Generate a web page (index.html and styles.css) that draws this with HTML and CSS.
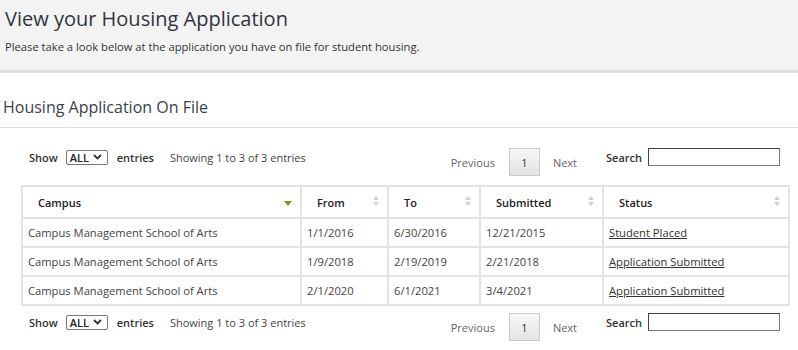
FILE: index.html
```html
<!DOCTYPE html>
<html>
<head>
<meta charset="utf-8">
<link rel="stylesheet" href="styles.css">
</head>
<body>
<header class="page-header">
  <h1 class="page-title">View your Housing Application</h1>
  <p class="page-sub">Please take a look below at the application you have on file for student housing.</p>
</header>
<section class="section">
  <h2 class="section-title">Housing Application On File</h2>
  <div class="dt">
    <div class="controls">
      <div class="length">
        <span class="lbl">Show</span>
        <span class="select">ALL <svg width="9" height="6" viewBox="0 0 9 6"><path d="M1 1 L4.5 4.5 L8 1" fill="none" stroke="#333" stroke-width="1.8"/></svg></span>
        <span class="lbl">entries</span>
        <span class="info">Showing 1 to 3 of 3 entries</span>
      </div>
      <div class="right">
        <div class="pager">
          <span class="pg-link">Previous</span>
          <span class="pg-btn">1</span>
          <span class="pg-link">Next</span>
        </div>
        <label class="search"><span class="lbl">Search</span><span class="input"></span></label>
      </div>
    </div>
    <table class="grid">
      <colgroup>
        <col class="c1"><col class="c2"><col class="c3"><col class="c4"><col class="c5">
      </colgroup>
      <thead>
        <tr>
          <th>Campus<span class="sort-active"></span></th>
          <th>From<span class="sort"></span></th>
          <th>To<span class="sort"></span></th>
          <th>Submitted<span class="sort"></span></th>
          <th>Status<span class="sort"></span></th>
        </tr>
      </thead>
      <tbody>
        <tr><td>Campus Management School of Arts</td><td>1/1/2016</td><td>6/30/2016</td><td>12/21/2015</td><td><a href="#">Student Placed</a></td></tr>
        <tr><td>Campus Management School of Arts</td><td>1/9/2018</td><td>2/19/2019</td><td>2/21/2018</td><td><a href="#">Application Submitted</a></td></tr>
        <tr><td>Campus Management School of Arts</td><td>2/1/2020</td><td>6/1/2021</td><td>3/4/2021</td><td><a href="#">Application Submitted</a></td></tr>
      </tbody>
    </table>
    <div class="controls bottom">
      <div class="length">
        <span class="lbl">Show</span>
        <span class="select">ALL <svg width="9" height="6" viewBox="0 0 9 6"><path d="M1 1 L4.5 4.5 L8 1" fill="none" stroke="#333" stroke-width="1.8"/></svg></span>
        <span class="lbl">entries</span>
        <span class="info">Showing 1 to 3 of 3 entries</span>
      </div>
      <div class="right">
        <div class="pager">
          <span class="pg-link">Previous</span>
          <span class="pg-btn">1</span>
          <span class="pg-link">Next</span>
        </div>
        <label class="search"><span class="lbl">Search</span><span class="input"></span></label>
      </div>
    </div>
  </div>
</section>
</body>
</html>
```
FILE: styles.css
```css
* { box-sizing: border-box; }
html, body { margin: 0; padding: 0; background: #fff; }
body { font-family: "Open Sans", "Liberation Sans", sans-serif; color: #333; }

.page-header {
  background: #f3f3f3;
  height: 73px;
  border-bottom: 3px solid #dedede;
  padding: 6px 5px 0;
}
.page-title {
  margin: 0;
  font-size: 20px;
  font-weight: 400;
  line-height: 26px;
  color: #2f3540;
}
.page-sub {
  margin: 8px 0 0;
  font-size: 11.2px;
  line-height: 14px;
  color: #333;
}

.section-title {
  margin: 0;
  padding: 23px 3px 0;
  height: 55px;
  border-bottom: 1px solid #ddd;
  font-size: 16px;
  font-weight: 400;
  line-height: 22px;
  color: #3a3f48;
}

.dt { margin: 0 10px 0 21px; }

.controls {
  display: flex;
  justify-content: space-between;
  padding: 20px 8px 0;
  height: 57px;
}
.controls.bottom { padding-top: 7px; height: 45px; }

.length { display: flex; align-items: center; height: 18px; font-size: 11px; }
.lbl { font-weight: 600; font-size: 11px; color: #333; }
.select {
  display: inline-flex;
  align-items: center;
  gap: 4px;
  height: 15px;
  width: 42px;
  margin: 0 9px 0 8px;
  padding: 0 3px;
  border: 1px solid #777;
  border-radius: 2px;
  font-size: 11px;
  font-weight: 600;
  color: #222;
}
.info { margin-left: 16px; font-size: 11px; color: #444; }

.right { display: flex; align-items: flex-start; }
.pager { display: flex; align-items: center; height: 28px; margin-right: 29px; }
.pg-link { font-size: 11px; color: #666; }
.pg-btn {
  width: 31px;
  height: 28px;
  margin: 0 13px 0 14px;
  display: flex;
  align-items: center;
  justify-content: center;
  border: 1px solid #cacaca;
  background: linear-gradient(#f8f8f8, #e3e3e3);
  font-size: 11px;
  color: #333;
}
.search { display: flex; align-items: center; height: 18px; }
.input {
  display: block;
  width: 132px;
  height: 18px;
  margin-left: 6px;
  border: 1px solid #444;
  border-right-color: #777;
  border-bottom-color: #777;
  background: #fff;
}

.grid {
  width: 767px;
  border-collapse: collapse;
  table-layout: fixed;
  font-size: 11.2px;
}
.c1 { width: 279px; }
.c2 { width: 87px; }
.c3 { width: 92px; }
.c4 { width: 123px; }
.c5 { width: 186px; }
.grid th, .grid td {
  border: 2px solid #e3e3e3;
  text-align: left;
}
.grid th {
  position: relative;
  height: 32px;
  padding: 0 14px 0 15px;
  font-weight: 600;
  font-size: 11px;
  color: #222;
}
.grid td {
  height: 29px;
  padding: 0 5px;
  color: #444;
}
.grid td a { color: #333; text-decoration: underline; }

.sort, .sort-active {
  position: absolute;
  right: 8px;
  top: 50%;
}
.sort::before, .sort::after {
  content: "";
  position: absolute;
  left: 0;
  border-left: 3px solid transparent;
  border-right: 3px solid transparent;
}
.sort::before { top: -6px; border-bottom: 4px solid #d0d0d0; }
.sort::after { top: 0px; border-top: 4px solid #d0d0d0; }
.sort { width: 6px; }
.sort-active {
  width: 0; height: 0;
  margin-top: -1px;
  border-left: 4px solid transparent;
  border-right: 4px solid transparent;
  border-top: 5px solid #6e9f1f;
}
```
